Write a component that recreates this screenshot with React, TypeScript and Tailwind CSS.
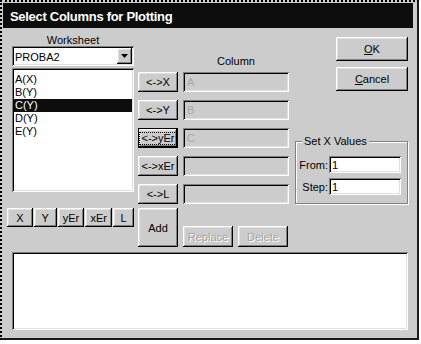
import React from "react";

const raised =
  "shadow-[inset_-1px_-1px_0_#000,inset_1px_1px_0_#fff,inset_-2px_-2px_0_#808080,inset_2px_2px_0_#dfdfdf]";
const sunken =
  "shadow-[inset_1px_1px_0_#808080,inset_-1px_-1px_0_#fff,inset_2px_2px_0_#000,inset_-2px_-2px_0_#dfdfdf]";
const disabledText = "text-[#a4a4a4] [text-shadow:1px_1px_0_#fff]";

/** Classic raised push button */
const Btn = ({
  className = "",
  children,
  disabled,
}: {
  className?: string;
  children: React.ReactNode;
  disabled?: boolean;
}) => (
  <div
    className={`flex items-center justify-center bg-[#cccccc] ${raised} ${
      disabled ? disabledText : "text-black"
    } ${className}`}
  >
    {children}
  </div>
);

/** Sunken, disabled column field */
const ColField = ({ value }: { value?: string }) => (
  <div
    className={`w-[106px] h-[20px] flex items-center pl-[4px] text-[#a8a8a8] ${sunken}`}
  >
    {value}
  </div>
);

const columns = [
  { label: "<->X", value: "A" },
  { label: "<->Y", value: "B" },
  { label: "<->yEr", value: "C", focused: true },
  { label: "<->xEr", value: "" },
  { label: "<->L", value: "" },
];

const items = ["A(X)", "B(Y)", "C(Y)", "D(Y)", "E(Y)"];

export default function App() {
  return (
    <div className="w-[421px] h-[344px] bg-white font-['Liberation_Sans',Arial,sans-serif] text-[11px] leading-[12px] text-black">
      <div className="w-[419px] h-[340px] bg-[#cccccc] border-2 [border-style:dotted_solid_solid_dotted] border-l-black border-t-black border-r-[#1a1a1a] border-b-[#1a1a1a] p-px">
        {/* Title bar */}
        <div className="w-[410px] h-[25px] bg-[#0d0d0d] flex items-center pl-[7px] pt-[2px]">
          <span className="text-white font-bold text-[13px] tracking-[-0.3px]">
            Select Columns for Plotting
          </span>
        </div>

        <div className="flex h-[219px] pl-[4px]">
          {/* Left column: worksheet + list */}
          <div className="w-[127px] flex flex-col">
            <div className="ml-[5px] w-[122px] mt-[6px] h-[12px] text-center">
              Worksheet
            </div>
            <div
              className={`ml-[5px] w-[122px] h-[20px] bg-white flex items-center p-[2px] ${sunken}`}
            >
              <span className="flex-1 pl-px pt-px text-[11px]">PROBA2</span>
              <div className={`w-[15px] h-[16px] flex items-center justify-center bg-[#cccccc] ${raised}`}>
                <svg width="7" height="4" viewBox="0 0 7 4">
                  <path d="M0 0h7L3.5 4z" fill="#000" />
                </svg>
              </div>
            </div>
            <div
              className={`ml-[5px] mt-[2px] w-[122px] h-[124px] bg-white p-[2px] pt-[5px] ${sunken}`}
            >
              {items.map((item, i) => (
                <div
                  key={item}
                  className={`h-[13px] leading-[13px] pl-[1px] ${
                    i === 2 ? "bg-[#0d0d0d] text-white" : ""
                  }`}
                >
                  {item}
                </div>
              ))}
            </div>
            <div className="mt-[16px] flex gap-[1px]">
              <Btn className="w-[26px] h-[19px]">X</Btn>
              <Btn className="w-[23px] h-[19px]">Y</Btn>
              <Btn className="w-[27px] h-[19px]">yEr</Btn>
              <Btn className="w-[27px] h-[19px]">xEr</Btn>
              <Btn className="w-[21px] h-[19px]">L</Btn>
            </div>
          </div>

          {/* Middle column: column assignment */}
          <div className="ml-[4px] w-[151px] flex flex-col">
            <div className="ml-[45px] w-[106px] mt-[27px] h-[12px] text-center">
              Column
            </div>
            <div className="mt-[5px] flex flex-col gap-[8px]">
              {columns.map((c) => (
                <div key={c.label} className="flex gap-[5px]">
                  {c.focused ? (
                    <div className="w-[40px] h-[20px] border border-black">
                      <Btn className="w-full h-full">
                        <span className="outline outline-1 outline-dotted outline-black px-px leading-[11px]">
                          {c.label}
                        </span>
                      </Btn>
                    </div>
                  ) : (
                    <Btn className="w-[40px] h-[20px]">{c.label}</Btn>
                  )}
                  <ColField value={c.value} />
                </div>
              ))}
            </div>
            <div className="mt-[4px] flex items-end gap-[5px]">
              <Btn className="w-[40px] h-[39px]">Add</Btn>
              <Btn className="w-[50px] h-[21px]" disabled>
                Replace
              </Btn>
              <Btn className="w-[50px] h-[21px]" disabled>
                Delete
              </Btn>
            </div>
          </div>

          {/* Right column: OK / Cancel / Set X Values */}
          <div className="ml-[6px] w-[113px] flex flex-col">
            <Btn className="self-end mt-[9px] w-[72px] h-[24px]">
              <span>
                <span className="underline">O</span>K
              </span>
            </Btn>
            <Btn className="self-end mt-[6px] w-[72px] h-[24px]">
              <span>
                <span className="underline">C</span>ancel
              </span>
            </Btn>
            <fieldset className="mt-[44px] border border-[#808080] shadow-[1px_1px_0_#fff,inset_1px_1px_0_#fff] pb-[8px]">
              <legend className="ml-[6px] px-[2px] h-[12px] bg-[#cccccc]">
                Set X Values
              </legend>
              <div className="mt-[9px] flex items-center">
                <span className="w-[33px] text-right pr-px">From:</span>
                <div className={`w-[72px] h-[17px] bg-white flex items-center pl-[3px] ${sunken}`}>
                  1
                </div>
              </div>
              <div className="mt-[5px] flex items-center">
                <span className="w-[33px] text-right pr-px">Step:</span>
                <div className={`w-[72px] h-[17px] bg-white flex items-center pl-[3px] ${sunken}`}>
                  1
                </div>
              </div>
            </fieldset>
          </div>
        </div>

        {/* Plot list */}
        <div className={`ml-[9px] mt-[5px] w-[396px] h-[78px] bg-white ${sunken}`} />
      </div>
    </div>
  );
}
